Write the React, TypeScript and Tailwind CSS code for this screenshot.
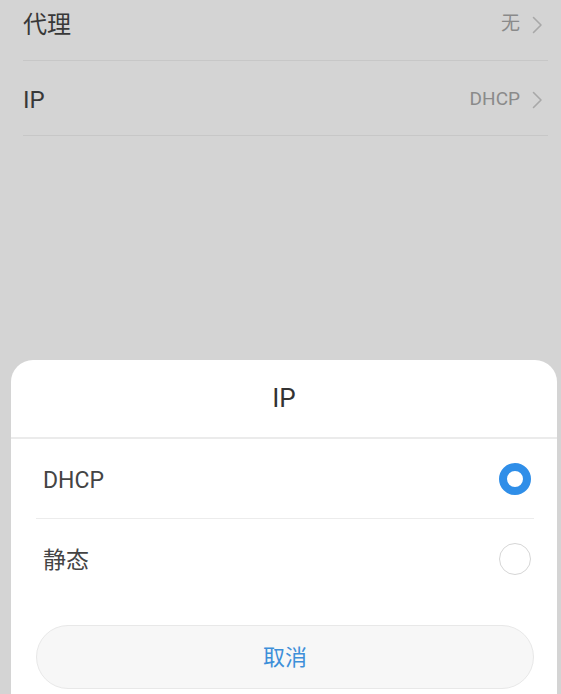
import * as React from 'react';

const font = { fontFamily: 'Roboto, "Noto Sans CJK SC", sans-serif' };

interface SettingRowProps {
  readonly label: string;
  readonly value: string;
}

function Chevron() {
  return (
    <svg width="11" height="18" viewBox="0 0 11 18" fill="none">
      <polyline points="1.5,1.5 9,9 1.5,16.5" stroke="#a8a8a8" strokeWidth="1.6" strokeLinejoin="round" strokeLinecap="round" />
    </svg>
  );
}

function SettingRow({ label, value }: SettingRowProps) {
  return (
    <div className="h-[75px] pt-[3px] flex items-center justify-between border-b border-[#c7c7c7] pr-[5px]">
      <span className="text-[24px] text-[#383838]">{label}</span>
      <div className="flex items-center gap-[12px]">
        <span className="text-[19px] text-[#8a8a8a]">{value}</span>
        <Chevron />
      </div>
    </div>
  );
}

interface OptionRowProps {
  readonly label: string;
  readonly checked: boolean;
  readonly last?: boolean;
}

function OptionRow({ label, checked, last }: OptionRowProps) {
  return (
    <div className={`h-[80px] flex items-center justify-between pl-[7px] pr-[3px] ${last ? '' : 'border-b border-[#ececec]'}`}>
      <span className="text-[23px] text-[#444444] pt-[5px]">{label}</span>
      {checked ? (
        <span className="w-[32px] h-[32px] rounded-full border-[8px] border-[#2f8ee8] bg-white" />
      ) : (
        <span className="w-[32px] h-[32px] rounded-full border-[1.5px] border-[#d6d6d6] bg-white" />
      )}
    </div>
  );
}

export default function App() {
  return (
    <div className="h-[694px] w-full bg-[#d4d4d4] flex flex-col overflow-hidden" style={font}>
      <div className="-mt-[14px] pl-[23px] pr-[13px]">
        <SettingRow label="代理" value="无" />
        <SettingRow label="IP" value="DHCP" />
      </div>

      <div className="flex-1" />

      <div className="ml-[11px] mr-[4px] bg-white rounded-t-[22px] flex flex-col">
        <div className="h-[79px] flex items-center justify-center border-b-2 border-[#ebebeb]">
          <span className="text-[26px] text-[#333333]">IP</span>
        </div>
        <div className="pl-[25px] pr-[23px]">
          <OptionRow label="DHCP" checked />
          <OptionRow label="静态" checked={false} last />
          <div className="mt-[26px] mb-[5px] h-[64px] rounded-full bg-[#f7f7f7] border border-[#e8e8e8] flex items-center justify-center">
            <span className="text-[22px] text-[#3d8fd9]">取消</span>
          </div>
        </div>
      </div>
    </div>
  );
}
